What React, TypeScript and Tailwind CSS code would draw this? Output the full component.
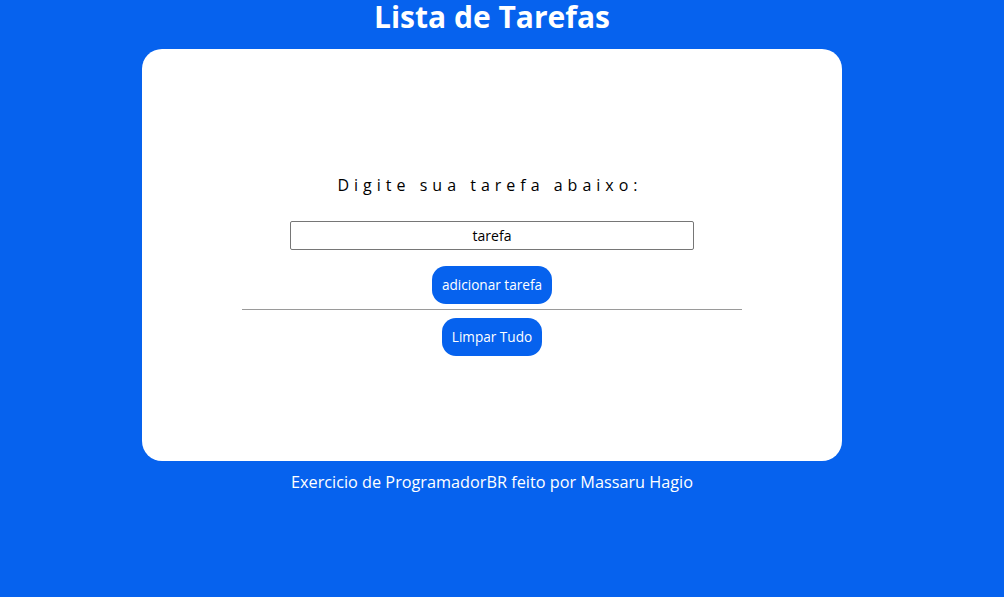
import React from "react";

export default function App() {
  return (
    <div className="min-h-[597px] w-full bg-[#0662ee] font-['Open_Sans',sans-serif] flex flex-col items-center pr-[20px]">
      <h1 className="m-0 text-[30px] leading-[33px] font-bold text-white">Lista de Tarefas</h1>
      <div className="mt-[16px] w-[700px] h-[412px] bg-white rounded-[20px] flex flex-col items-center pt-[125px]">
        <p className="text-[16px] leading-[22px] tracking-[5px] text-black pr-[4px]">Digite sua tarefa abaixo:</p>
        <input
          defaultValue="tarefa"
          className="mt-[25px] w-[404px] h-[29px] border border-[#767676] rounded-[2px] text-center text-[14px] text-black outline-none"
        />
        <button className="mt-[16px] h-[38px] px-[10px] rounded-[14px] bg-[#0662ee] text-white text-[13.6px]">adicionar tarefa</button>
        <hr className="mt-[5px] w-[500px] border-0 border-t border-[#9a9a9a]" />
        <button className="mt-[8px] h-[38px] px-[10px] rounded-[14px] bg-[#0662ee] text-white text-[13.6px]">Limpar Tudo</button>
      </div>
      <p className="mt-[10px] text-[16.25px] leading-[22px] text-white">Exercicio de ProgramadorBR feito por Massaru Hagio</p>
    </div>
  );
}
